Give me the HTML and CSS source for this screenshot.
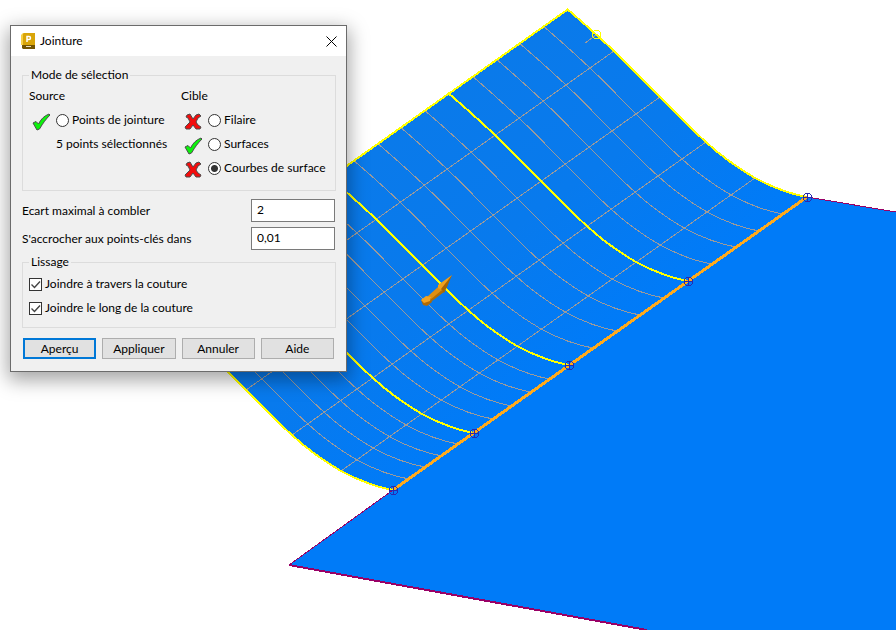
FILE: index.html
```html
<!DOCTYPE html>
<html lang="fr">
<head>
<meta charset="utf-8">
<title>Jointure</title>
<link rel="stylesheet" href="styles.css">
</head>
<body>
<svg class="viewport" viewBox="0 0 896 630" preserveAspectRatio="xMinYMin slice" aria-hidden="true">
  <defs>
    <linearGradient id="shade" gradientUnits="userSpaceOnUse" x1="430" y1="110" x2="600" y2="343">
      <stop offset="0" stop-color="#0a7aea"/>
      <stop offset="0.5" stop-color="#087aed"/>
      <stop offset="1" stop-color="#007bf8"/>
    </linearGradient>
    <path id="profile" d="M-240-188C-222-173-207-159-193-146C-177-131-162-115-147-100C-132-85-117-69-101-55C-85-40-69-29-52-19C-35-10-18-3 0 0"/>
    <g id="pin">
      <path d="M-1.500-3.500H2.500L4.500-1.500V2.500L2.500 4.500H-1.500L-3.500 2.500V-1.500ZM-4 .5H5M.5-4V5"/>
    </g>
  </defs>

  <path class="plane" d="M393 490L807 197L896 212V630H647L289 565Z"/>
  <path fill="url(#shade)" d="M567 9C585 24 600 38 614 51C630 66 645 82 660 97C675 112 690 128 706 142C722 157 738 168 755 178C772 187 789 194 807 197L393 490C375 487 358 480 341 471C324 461 308 450 292 435C276 421 261 405 246 390C231 375 216 359 200 344C186 331 171 317 153 302Z"/>

  <g class="grid">
    <use href="#profile" x="783" y="214"/><use href="#profile" x="759" y="231"/><use href="#profile" x="736" y="247"/><use href="#profile" x="712" y="264"/>
    <use href="#profile" x="664" y="298"/><use href="#profile" x="640" y="315"/><use href="#profile" x="617" y="331"/><use href="#profile" x="593" y="348"/>
    <use href="#profile" x="550" y="379"/><use href="#profile" x="531" y="392"/><use href="#profile" x="512" y="406"/><use href="#profile" x="493" y="419"/>
    <use href="#profile" x="458" y="444"/><use href="#profile" x="442" y="456"/><use href="#profile" x="425" y="467"/><use href="#profile" x="409" y="479"/>
    <path d="M614 51L200 344M660 97L246 390M706 142L292 435M755 178L341 471M596 35L585 43"/>
  </g>

  <path class="edge" d="M289 565L393 490M807 197L896 212"/>
  <path class="edge edge-front" d="M289 565L647 630"/>
  <g class="curve">
    <use href="#profile" x="807" y="197"/><use href="#profile" x="688" y="281"/><use href="#profile" x="569" y="365"/><use href="#profile" x="474" y="433"/><use href="#profile" x="393" y="490"/>
    <path d="M567 10L153 303"/>
  </g>
  <path class="handle" d="M594.500 30.500H598.500L600.500 32.500V36.500L598.500 38.500H594.500L592.500 36.500V32.500Z"/>
  <path class="seam" d="M393 490L807 197"/>
  <g class="pins">
    <use href="#pin" x="807" y="197"/><use href="#pin" x="688" y="281"/><use href="#pin" x="569" y="365"/><use href="#pin" x="474" y="433"/><use href="#pin" x="393" y="490"/>
  </g>
  <g class="arrow">
    <path fill="#b06c06" d="M428 298L439 288L444 292L432 301Z"/>
    <path fill="#e08f10" d="M427 297L438 287L442 290L430 300Z"/>
    <path fill="#b06a05" d="M421 300L423 305L427 306L432 302L431 298Z"/>
    <path fill="#f3a321" d="M421 300L426 296L431 297L430 301L424 303Z"/>
    <path fill="#f0a01e" d="M452 275L438 285L438 288L443 291Z"/>
    <path fill="#a66304" d="M452 275L441 289L444 293L447 287Z"/>
  </g>
</svg>

<main class="dialog" role="dialog" aria-labelledby="dialog-title">
  <header class="titlebar">
    <svg class="app-icon" viewBox="0 0 14 16" aria-hidden="true">
      <path fill="#f6cf45" d="M2 0H13V12H0V2Z"/>
      <path fill="#d9a508" d="M3 0H14V12H2V1Z"/>
      <path fill="#735400" d="M1 12H14V16H2L1 15Z"/>
      <path fill="none" stroke="#fff" stroke-width="1.5" d="M6 9V3.500H8Q9.500 3.500 9.500 5T8 6.500H6"/>
      <path stroke="#e8dfc4" stroke-width="1" d="M5 13.500H10"/>
    </svg>
    <h1 class="title" id="dialog-title">Jointure</h1>
    <button class="close" type="button" aria-label="Fermer">
      <svg viewBox="0 0 11 11"><path d="M.5.5L10.500 10.500M10.500.5L.5 10.500"/></svg>
    </button>
  </header>

  <form class="body">
    <fieldset class="group modes">
      <legend>Mode de sélection</legend>
      <div class="column">
        <div class="heading">Source</div>
        <div class="row">
          <svg class="mark ok" viewBox="0 0 18 18"><path d="M1 10L4 8.500L6.500 11C9 6 12 3 17 1L18 2C14 6 11 10 7.500 16L5 17Z"/></svg>
          <label><input type="radio" name="mode">Points de jointure</label>
        </div>
        <div class="row note">5 points sélectionnés</div>
      </div>
      <div class="column">
        <div class="heading">Cible</div>
        <div class="row">
          <svg class="mark no" viewBox="0 0 18 18"><path d="M3 2L6 1L9 6L12 2L15 1L17 3L14 5L12 9L14 12L17 14L16 16H12L9 12L6 16H2L1 14L3 12L6 9L4 5L2 4Z"/></svg>
          <label><input type="radio" name="mode">Filaire</label>
        </div>
        <div class="row">
          <svg class="mark ok" viewBox="0 0 18 18"><path d="M1 10L4 8.500L6.500 11C9 6 12 3 17 1L18 2C14 6 11 10 7.500 16L5 17Z"/></svg>
          <label><input type="radio" name="mode">Surfaces</label>
        </div>
        <div class="row">
          <svg class="mark no" viewBox="0 0 18 18"><path d="M3 2L6 1L9 6L12 2L15 1L17 3L14 5L12 9L14 12L17 14L16 16H12L9 12L6 16H2L1 14L3 12L6 9L4 5L2 4Z"/></svg>
          <label><input type="radio" name="mode" checked>Courbes de surface</label>
        </div>
      </div>
    </fieldset>

    <div class="fields">
      <label for="gap">Ecart maximal à combler</label>
      <input class="text" id="gap" type="text" value="2">
      <label for="snap">S'accrocher aux points-clés dans</label>
      <input class="text" id="snap" type="text" value="0,01">
    </div>

    <fieldset class="group smoothing">
      <legend>Lissage</legend>
      <div class="row"><label><input type="checkbox" checked>Joindre à travers la couture</label></div>
      <div class="row"><label><input type="checkbox" checked>Joindre le long de la couture</label></div>
    </fieldset>

    <div class="actions">
      <button class="default" type="button">Aperçu</button>
      <button type="button">Appliquer</button>
      <button type="button">Annuler</button>
      <button type="button">Aide</button>
    </div>
  </form>
</main>
</body>
</html>
```
FILE: styles.css
```css
* { box-sizing: border-box; }

body {
  margin: 0;
  min-height: 100vh;
  padding: 25px 10px;
  overflow: hidden;
  background: #fff;
  color: #000;
  font: 12px/16px Lato, "Open Sans", sans-serif;
}

/* 3D view */
.viewport {
  position: absolute;
  inset: 0;
  width: 100%;
  height: 100%;
  fill: none;
  shape-rendering: crispEdges;
}
.plane { fill: #007bf8; }
.grid { stroke: #9b9a9b; stroke-width: 1; }
.curve { stroke: #ffff00; stroke-width: 2; }
.edge { stroke: #990066; stroke-width: 1; }
.edge-front { stroke-width: 2; }
.handle { stroke: #ffff00; stroke-width: 1; }
.seam { stroke: #ffaa1c; stroke-width: 3; }
.pins { stroke: #2929b0; stroke-width: 1; }
.arrow { shape-rendering: auto; }

/* Dialog */
.dialog {
  position: relative;
  width: 337px;
  max-width: 100%;
  border: 1px solid #6b6b6b;
  background: #f0f0f0;
  box-shadow: 0 6px 18px 2px rgba(0, 0, 0, 0.36);
}
.titlebar {
  display: flex;
  align-items: center;
  height: 30px;
  padding: 0 9px 0 10px;
  gap: 5px;
  background: #fff;
}
.app-icon { width: 14px; height: 16px; }
.title { flex: 1; margin: 0; font-size: 12px; font-weight: 400; }
.close {
  display: flex;
  padding: 0;
  border: 0;
  background: none;
}
.close svg { width: 11px; height: 11px; stroke: #000; stroke-width: 1; }

.body { padding: 11px 10px 12px 11px; }
.group {
  min-width: 0;
  margin: 0;
  padding: 0 6px;
  border: 1px solid #dcdcdc;
}
.group legend { padding: 0 2px; }
.modes {
  display: grid;
  grid-template-columns: 152px 1fr;
  padding-bottom: 10px;
}
.heading { line-height: 25px; }
.row { display: flex; align-items: center; height: 24px; white-space: nowrap; }
.row label { display: flex; align-items: center; gap: 3px; }
.note { padding-left: 27px; }
.mark {
  flex: none;
  width: 18px;
  height: 18px;
  margin: 4px 6px 0 3px;
  stroke: #4c4c4c;
  stroke-width: 1;
}
.ok { fill: #0df20d; }
.no { fill: #f20d0d; }

input[type="radio"],
input[type="checkbox"] {
  appearance: none;
  flex: none;
  width: 13px;
  height: 13px;
  margin: 0;
  border: 1px solid #333;
  background: #fff;
}
input[type="radio"] { border-radius: 50%; }
input[type="radio"]:checked {
  background: radial-gradient(circle, #333 3px, #fff 4px);
}
input[type="checkbox"]:checked {
  background: #fff url("data:image/svg+xml,%3Csvg xmlns='http://www.w3.org/2000/svg' viewBox='0 0 11 11'%3E%3Cpath d='M1.500 5.500L4.500 8.500L10 2.500' fill='none' stroke='%23444' stroke-width='1.400'/%3E%3C/svg%3E");
}

.fields {
  display: grid;
  grid-template-columns: 1fr 84px;
  align-items: center;
  gap: 5px;
  margin: 8px 1px 4px 0;
}
.text {
  width: 100%;
  height: 23px;
  padding: 0 5px 2px;
  border: 1px solid #7a7a7a;
  background: #fff;
  color: #000;
  font: inherit;
}
.smoothing { padding-top: 2px; padding-bottom: 7px; }

.actions {
  display: grid;
  grid-template-columns: repeat(4, 1fr);
  gap: 6px;
  margin: 10px 2px 0 1px;
}
.actions button {
  height: 21px;
  padding: 0;
  border: 1px solid #adadad;
  background: #e1e1e1;
  color: #000;
  font: inherit;
  line-height: 19px;
}
.actions .default { border: 2px solid #0078d7; line-height: 17px; }
```
